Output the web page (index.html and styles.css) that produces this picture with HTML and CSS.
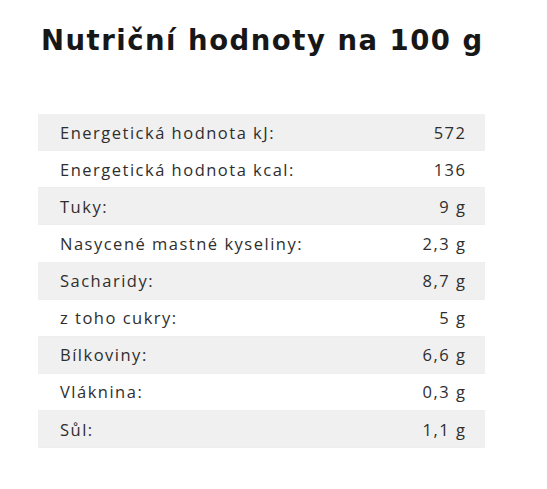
FILE: index.html
```html
<!DOCTYPE html>
<html lang="cs">
<head>
<meta charset="utf-8">
<link rel="stylesheet" href="styles.css">
</head>
<body>
<section class="nutrition">
  <h2 class="title">Nutriční hodnoty na 100 g</h2>
  <table class="table">
    <tr class="row odd"><td>Energetická hodnota kJ:</td><td class="val">572</td></tr>
    <tr class="row"><td>Energetická hodnota kcal:</td><td class="val">136</td></tr>
    <tr class="row odd"><td>Tuky:</td><td class="val">9 g</td></tr>
    <tr class="row"><td>Nasycené mastné kyseliny:</td><td class="val">2,3 g</td></tr>
    <tr class="row odd"><td>Sacharidy:</td><td class="val">8,7 g</td></tr>
    <tr class="row"><td>z toho cukry:</td><td class="val">5 g</td></tr>
    <tr class="row odd"><td>Bílkoviny:</td><td class="val">6,6 g</td></tr>
    <tr class="row"><td>Vláknina:</td><td class="val">0,3 g</td></tr>
    <tr class="row odd"><td>Sůl:</td><td class="val">1,1 g</td></tr>
  </table>
</section>
</body>
</html>
```
FILE: styles.css
```css
html, body { margin: 0; padding: 0; background: #fff; }
body { font-family: "Open Sans", sans-serif; color: #2e2e2e; }
.nutrition { width: 447px; margin-left: 38px; padding-top: 22px; }
.title {
  margin: 0 0 0 3px;
  font-family: "DejaVu Sans", sans-serif;
  font-size: 27.5px;
  line-height: 36px;
  font-weight: 700;
  color: #171717;
  letter-spacing: 1.5px;
  white-space: nowrap;
}
.table { width: 100%; border-collapse: collapse; margin-top: 56px; }
.row td {
  height: 36.125px;
  padding: 0 18.5px 0 22px;
  font-size: 16.5px;
  font-weight: 400;
  border-bottom: 1px solid #eeeeee;
  white-space: nowrap;
  letter-spacing: 1.5px;
}
.row.odd td { background: #f0f0f0; }
.val { text-align: right; }
```
